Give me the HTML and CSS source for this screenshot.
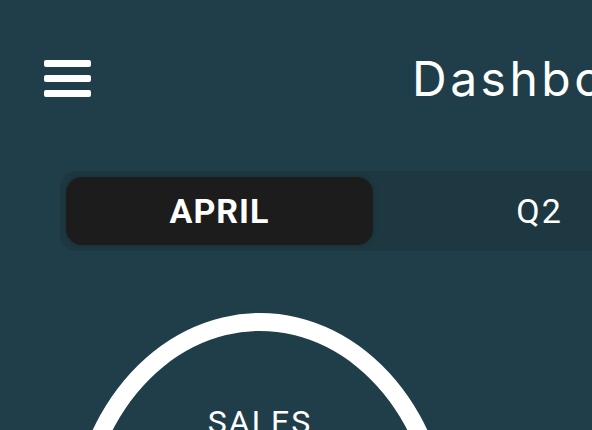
FILE: index.html
```html
<!DOCTYPE html>
<html lang="en">
<head>
    <meta charset="UTF-8">
    <meta name="viewport" content="width=device-width, initial-scale=1.0">
    <title>Dashboard</title>
    <link rel="stylesheet" href="styles.css">
</head>
<body>

    <!-- Header -->
    <div class="header">
        <div class="menu-btn">
            <span></span>
            <span></span>
            <span></span>
        </div>
        <h1 class="title">Dashboard</h1>
    </div>

    <!-- Periodo -->
    <div class="tabs">
        <div class="tab active">APRIL</div>
        <div class="tab">Q2</div>
        <div class="tab">YEAR</div>
    </div>

    <!-- Ventas -->
    <div class="gauge">
        <div class="gauge-label">SALES</div>
    </div>

</body>
</html>
```

FILE: styles.css
```css
body {
    font-family: Roboto, "Liberation Sans", sans-serif;
    margin: 0;
    background-color: #203e4a;
    color: #ffffff;
    overflow: hidden;
    width: 592px;
    height: 430px;
}

.header {
    display: flex;
    align-items: center;
    height: 157px;
    padding-left: 44px;
    white-space: nowrap;
}

.menu-btn {
    display: flex;
    flex-direction: column;
    gap: 8px;
    width: 47px;
    flex-shrink: 0;
}

.menu-btn span {
    display: block;
    height: 7px;
    background-color: #ffffff;
    border-radius: 2px;
}

.title {
    margin: 0 0 0 321px;
    font-family: Inter, Roboto, sans-serif;
    font-size: 48px;
    font-weight: 400;
    letter-spacing: 3.5px;
    line-height: 1;
}

.tabs {
    display: flex;
    gap: 13px;
    width: 900px;
    margin: 14px 0 0 60px;
    padding: 6px;
    background-color: #1e3841;
    border-radius: 16px;
}

.tab {
    width: 307px;
    height: 68px;
    flex-shrink: 0;
    display: flex;
    align-items: center;
    justify-content: center;
    font-size: 34px;
    font-weight: 400;
    letter-spacing: 2px;
    border-radius: 16px;
}

.tab.active {
    background-color: #1c1c1c;
    font-weight: 700;
    letter-spacing: 1px;
    box-shadow: 0 0 6px rgba(0, 0, 0, 0.2);
}

.gauge {
    width: 348px;
    height: 348px;
    margin: 62px 0 0 68px;
    border: 18px solid #ffffff;
    border-radius: 50%;
    display: flex;
    justify-content: center;
    padding-top: 75px;
    box-sizing: content-box;
}

.gauge-label {
    font-size: 32px;
    letter-spacing: 2px;
    line-height: 1;
}
```
